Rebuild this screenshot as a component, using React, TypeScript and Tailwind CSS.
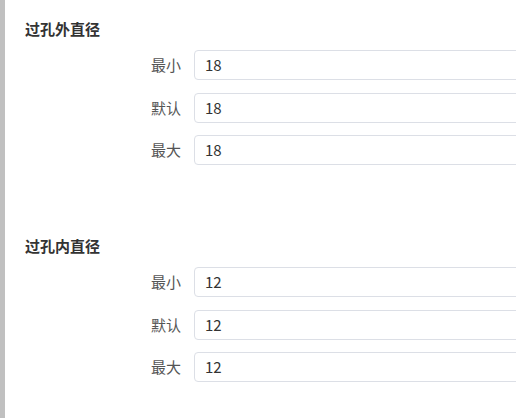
import React from "react";

const font = { fontFamily: '"Noto Sans CJK SC", "Noto Sans", sans-serif' };

function Row({ label, value, className = "" }: { label: string; value: string; className?: string }) {
  return (
    <div className={`flex items-center h-[30px] ${className}`}>
      <div className="w-[169px] shrink-0 pr-[13px] text-right text-[15px] leading-[20px] text-[#555]">{label}</div>
      <div className="h-[30px] w-[400px] shrink-0 rounded-[4px] border border-[#dcdfe6] bg-white flex items-center pl-[10px] text-[15px] text-[#333]">
        {value}
      </div>
    </div>
  );
}

function Section({ title, value, className = "" }: { title: string; value: string; className?: string }) {
  return (
    <div className={className}>
      <div className="text-[15px] leading-[20px] font-bold text-[#333]">{title}</div>
      <div className="mt-[11px] flex flex-col">
        <Row label="最小" value={value} />
        <Row label="默认" value={value} className="mt-[13px]" />
        <Row label="最大" value={value} className="mt-[12px]" />
      </div>
    </div>
  );
}

export default function App() {
  return (
    <div className="w-[516px] h-[418px] overflow-hidden bg-white flex" style={font}>
      <div className="w-[5px] h-full bg-[#c0c0c0] shrink-0" />
      <div className="flex-1 min-w-0 pl-[20px] pt-[19px] overflow-hidden">
        <Section title="过孔外直径" value="18" />
        <Section title="过孔内直径" value="12" className="mt-[71px]" />
      </div>
    </div>
  );
}
